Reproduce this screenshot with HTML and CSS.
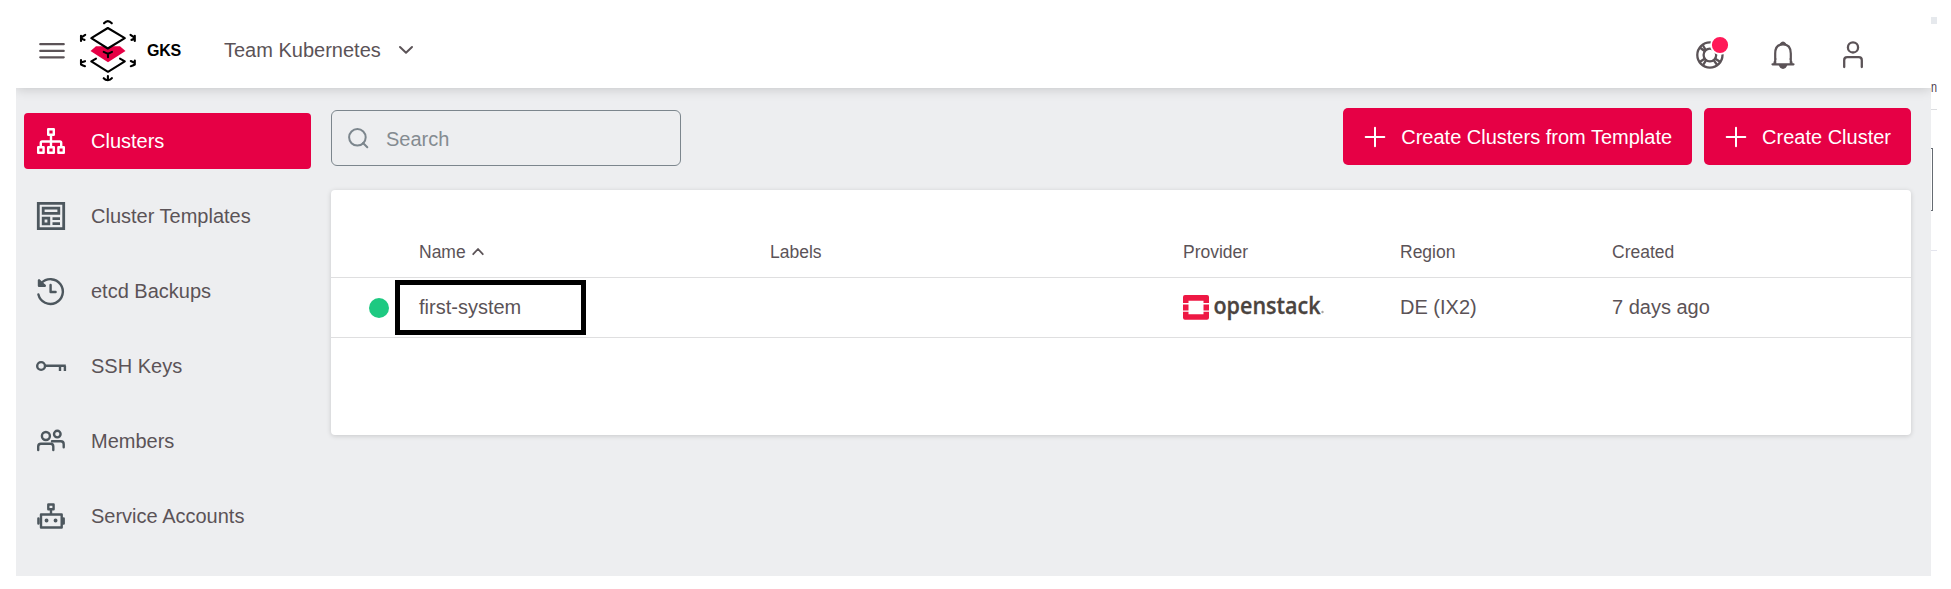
FILE: index.html
```html
<!DOCTYPE html>
<html lang="en">
<head>
<meta charset="utf-8">
<title>GKS Clusters</title>
<link rel="stylesheet" href="styles.css">
</head>
<body>
<div class="app">
  <header class="topbar">
    <button class="icon-btn menu" aria-label="Menu">
      <svg class="stroke" width="26" height="18" viewBox="39 42 26 18" stroke-width="2.3"><path d="M40.3 44.2h23.4M40.3 50.9h23.4M40.3 57.3h23.4"/></svg>
    </button>
    <svg class="logo" width="60" height="66" viewBox="78 18 60 66">
      <path class="logo-line" d="M96 58.700L91.3 61.4 108 71.8 124.800 61.400 120 58.700"/>
      <path class="logo-fill" d="M96 46.3h24l5.5 4.7L108 62.3 90.5 51z"/>
      <path class="logo-line top" d="M107.8 28L124.8 38.2 107.8 48.5 91.3 38.2z"/>
      <path class="logo-line" d="M103.7 51.9L108 53.9 112 51.9M108 53.9V57.3M104 23.3q3.8-4.4 7.8 0M103.7 78.2q1.7 2 4.2 2 2.500 0 4-2M107.9 76v4.300M81 35.700v5.200M81 37.600l4.200-2.800M81.300 38q1.800 1.800 3.200 1.900M134.800 35.700v5.200M134.500 37.600l-4-2.800M134.500 38q-1.500 1.800-3 1.900M81 60v4.500q2 1 4 1.700M81 62.500l4-1.300M134.800 60.500v4q-2 1.200-4 1.700M134.500 62.900l-3.700-1.900"/>
    </svg>
    <span class="brand">GKS</span>
    <button class="icon-btn project">Team Kubernetes
      <svg class="stroke" width="14" height="10" viewBox="399 46 14 10" stroke-width="2"><path d="M400 48l6 5.700 6-5.700"/></svg>
    </button>
    <div class="actions">
      <button class="icon-btn" aria-label="Support">
        <svg class="stroke" width="34" height="34" viewBox="1695 36 34 34" stroke-width="2.3">
          <circle cx="1709.900" cy="55" r="12.600"/><circle cx="1709.900" cy="55" r="6.300"/>
          <path d="M1703 45.500l2.800 4.500M1700.500 48l4 3M1700.500 61.500l4-2.800M1703.200 64.800l2.800-4.500M1713.800 60.300l3 4.200M1715.300 58.800l4.300 2.700M1713.800 50l2-3"/>
          <circle class="alert" cx="1720" cy="45" r="9"/>
        </svg>
      </button>
      <button class="icon-btn" aria-label="Notifications">
        <svg class="stroke" width="34" height="34" viewBox="1766 36 34 34" stroke-width="2.200"><path d="M1772.500 64.300h21M1775.200 64V53.500q0-9.200 7.800-9.200t7.800 9.200V64M1774.500 63l1-4M1791.500 63l-1-4"/><path class="solid" d="M1779.800 65h6.400q-1 2.800-3.200 2.800t-3.200-2.800zM1781 44q2-2.800 4 0z"/></svg>
      </button>
      <button class="icon-btn" aria-label="Account">
        <svg class="stroke" width="34" height="34" viewBox="1836 36 34 34" stroke-width="2.300"><circle cx="1853" cy="47.400" r="5.100"/><path d="M1844.200 67v-6.800q0-3 3-3h11.600q3 0 3 3v6.800"/></svg>
      </button>
    </div>
  </header>

  <div class="body">
    <nav class="sidebar">
      <a class="nav-item active">
        <svg class="nav-icon" viewBox="36 126 30 30"><path d="M48.200 129.200h5.600v5.600h-5.600zM38.200 147.200h5.400v5.600h-5.400zM48.200 147.200h5.600v5.600h-5.600zM58.400 147.200h5.400v5.600h-5.400zM51 135v12M40.800 147v-4.200q0-1.300 1.300-1.300h17.800q1.300 0 1.300 1.300v4.200"/></svg>Clusters</a>
      <a class="nav-item">
        <svg class="nav-icon square" viewBox="36 201 30 30"><path d="M38.300 203.300h25.400v25.400H38.300zM43.200 208.200h15.600v5.200H43.200zM43.200 218.200h5.600v5.600h-5.600zM52.500 218.600h7.500M52.500 223.600h7.500"/></svg>Cluster Templates</a>
      <a class="nav-item">
        <svg class="nav-icon" viewBox="36 276 30 30"><path d="M38.400 294.500A12.400 12.400 0 1 0 41.300 283.200"/><path class="solid" d="M39 280.300v5.400h5.800l-3-2.500z"/><path d="M50.600 285v7h5"/></svg>etcd Backups</a>
      <a class="nav-item">
        <svg class="nav-icon" viewBox="36 351 30 30"><circle cx="41.100" cy="366" r="3.900"/><path class="square" d="M45 365.800h20.800M60 366v5M64.900 366v5"/></svg>SSH Keys</a>
      <a class="nav-item">
        <svg class="nav-icon" viewBox="36 426 30 30"><circle cx="45.900" cy="436" r="4"/><circle cx="57.300" cy="434.100" r="3.300"/><path d="M38.200 450v-3.500q0-2.700 2.700-2.700h9.700q2.700 0 2.700 2.700v3.500M52 441.300h8.800q2.900 0 2.900 2.900v3"/></svg>Members</a>
      <a class="nav-item">
        <svg class="nav-icon" viewBox="36 501 30 30"><path d="M48.300 504.500h5.300v4.700h-5.300zM51 509.500v4.500M41 514.500h20.700v13H41zM38.400 518.500v5M63.700 518.500v5"/><path d="M46.500 520.500h.1M55.500 520.500h.1" stroke-width="3.800"/></svg>Service Accounts</a>
    </nav>

    <main class="content">
      <div class="toolbar">
        <label class="search">
          <svg width="22" height="22" viewBox="347 127 22 22"><circle cx="357.400" cy="137.300" r="8.300"/><path d="M363 143l4.300 4.300"/></svg>
          <span>Search</span>
        </label>
        <div class="buttons">
          <button class="btn"><svg width="20" height="20" viewBox="0 0 20 20"><path d="M10 .7v18.600M.7 10h18.600"/></svg>Create Clusters from Template</button>
          <button class="btn"><svg width="20" height="20" viewBox="0 0 20 20"><path d="M10 .7v18.600M.7 10h18.600"/></svg>Create Cluster</button>
        </div>
      </div>
      <section class="card">
        <div class="row head">
          <span></span>
          <span>Name <svg class="stroke sort" width="12" height="9" viewBox="0 0 12 9" stroke-width="1.800"><path d="M1.200 7.200L6 2l4.800 5.200"/></svg></span>
          <span>Labels</span><span>Provider</span><span>Region</span><span>Created</span>
        </div>
        <div class="row data">
          <span class="status"></span>
          <span class="name">first-system<i class="marker"></i></span>
          <span></span>
          <svg class="provider" width="144" height="36" viewBox="1183 289 144 36">
            <path class="os-mark" d="M1183 303v-6q0-2 2-2h22q2 0 2 2v6h-5.500v-2.300h-15v2.300zM1183 304.400h5.500v6h-5.500zM1203.500 304.400h5.500v6h-5.500zM1183 311.800h5.500v2.500h15v-2.500h5.500v6q0 2-2 2h-22q-2 0-2-2z"/>
            <text class="os-name" x="1213.500" y="313.500" textLength="107" lengthAdjust="spacingAndGlyphs">openstack</text>
            <circle class="os-reg" cx="1322.500" cy="312" r="1.200"/>
          </svg>
          <span>DE (IX2)</span><span>7 days ago</span>
        </div>
      </section>
    </main>
  </div>
</div>
<aside class="edge">
  <div class="edge-chip"></div>
  <div class="edge-text"><svg width="6" height="24" viewBox="0 0 6 24"><text x="0" y="17" textLength="6" lengthAdjust="spacingAndGlyphs">n</text></svg></div>
  <div class="edge-box"></div>
</aside>
</body>
</html>
```

FILE: styles.css
```css
* { box-sizing: border-box; }
body {
  margin: 0;
  height: 589px;
  padding-left: 16px;
  display: flex;
  overflow: hidden;
  background: #fff;
  color: #5b5357;
  font: 20px/24px "Liberation Sans", Arial, sans-serif;
}
button { font: inherit; color: inherit; border: 0; padding: 0; background: none; }
svg { display: block; flex: none; overflow: visible; }
.stroke { fill: none; stroke: #5b5357; stroke-linecap: round; stroke-linejoin: round; }
.solid { fill: currentColor; }

.app { width: 1915px; height: 576px; display: flex; flex-direction: column; background: #edeef0; clip-path: inset(0); }

.topbar {
  flex: none;
  height: 88px;
  display: flex;
  align-items: center;
  padding: 14px 61px 0 23px;
  background: #fff;
  box-shadow: 0 0 12px rgba(0, 0, 0, .2);
}
.topbar > :not(.actions) { margin-bottom: 1px; }
.icon-btn { display: flex; align-items: center; }
.logo { margin: 0 9px 0 13px; }
.logo-line { fill: none; stroke: #000; stroke-width: 2.100; stroke-linecap: round; stroke-linejoin: round; }
.logo-line.top { fill: #fff; }
.logo-fill { fill: #e60045; }
.brand { width: 77px; color: #000; font-size: 16px; font-weight: 700; letter-spacing: -.3px; }
.topbar .project { gap: 18px; margin-bottom: 2px; }
.actions { margin-left: auto; display: flex; gap: 37px; padding-top: 4px; }
.actions .icon-btn:nth-child(2) { margin-right: -1px; }
.alert { fill: #ff1a58; stroke: #fff; stroke-width: 1.800; }

.body { flex: 1; display: flex; padding: 20px 20px 0 8px; }
.sidebar { width: 287px; margin-right: 20px; padding-top: 5px; display: flex; flex-direction: column; gap: 19px; }
.nav-item { height: 56px; display: flex; align-items: center; gap: 25px; padding-left: 12px; border-radius: 4px; }
.nav-item.active { background: #e60045; color: #fff; }
.nav-icon { width: 30px; height: 30px; fill: none; stroke: #4d575e; color: #4d575e; stroke-width: 2.400; stroke-linecap: round; stroke-linejoin: round; }
.active .nav-icon { stroke: #fff; }
.square { stroke-linecap: butt; stroke-linejoin: miter; }
.nav-icon.square { stroke-width: 2.800; }

.content { flex: 1; }
.toolbar { display: flex; justify-content: space-between; height: 82px; align-items: flex-start; }
.search {
  width: 350px; height: 56px; margin-top: 2px;
  display: flex; align-items: center; gap: 17px; padding-left: 15px;
  border: 1px solid #7c868d; border-radius: 6px; color: #848b91;
}
.search span { padding-top: 2px; }
.search svg { fill: none; stroke: #7c868d; stroke-width: 2; stroke-linecap: round; }
.buttons { display: flex; gap: 12px; }
.btn { height: 57px; display: flex; align-items: center; gap: 16px; padding: 0 20px 0 22px; border-radius: 5px; background: #e60045; color: #fff; white-space: nowrap; }
.btn svg { stroke: #fff; stroke-width: 2; stroke-linecap: round; }

.card { height: 245px; padding-top: 34px; border-radius: 4px; background: #fff; box-shadow: 0 1px 5px rgba(0, 0, 0, .16); }
.row {
  height: 60px;
  display: grid;
  grid-template-columns: 88px 351px 413px 217px 212px 1fr;
  align-items: center;
  border-bottom: 1px solid #dfdfe0;
}
.row.head { height: 54px; padding-top: 2px; font-size: 17.500px; }
.row.data { padding-bottom: 2px; }
.sort { display: inline-block; margin-left: 1px; vertical-align: 2px; }
.status { width: 20px; height: 20px; margin: 2px 0 0 38px; border-radius: 50%; background: #1dc981; }
.name { position: relative; }
.marker { position: absolute; left: -24px; top: -15px; width: 191px; height: 55px; border: 5px solid #000; }
.os-mark { fill: #ee1844; }
.os-name { font: 600 23.500px "Open Sans", sans-serif; fill: #4b443f; stroke: #4b443f; stroke-width: .300; }
.os-reg { fill: #aaa5a2; }

.edge { width: 6px; height: 251px; padding-top: 17px; border-bottom: 1px solid #e4e5ee; }
.edge-chip { height: 7px; background: #e6e9ed; }
.edge-text { height: 86px; padding-top: 51px; border-bottom: 1px solid #dcdde0; font-size: 15px; }
.edge-text text { fill: #4a3a4c; }
.edge-box { width: 2px; height: 63px; margin-top: 38px; border: solid #666b72; border-width: 1px 1px 1px 0; }
```
